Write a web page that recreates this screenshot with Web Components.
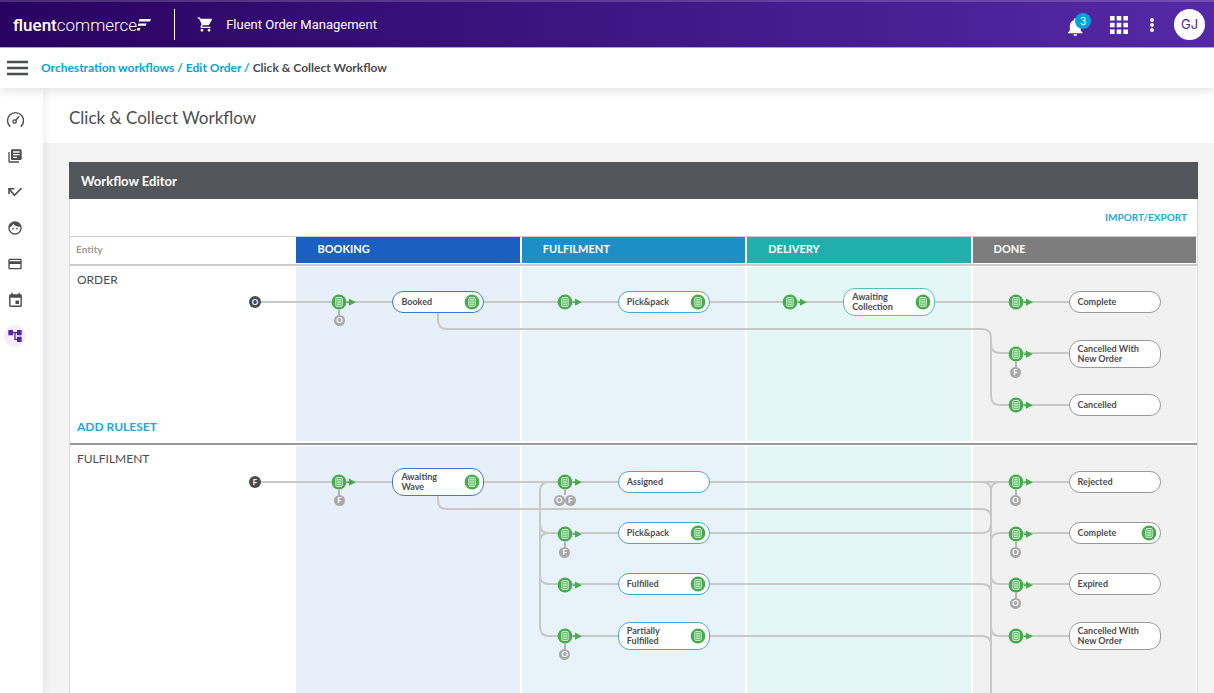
<!DOCTYPE html>
<html lang="en">
  <head>
    <meta charset="utf-8">
    <title>Click &amp; Collect Workflow</title>
    <style>
      body {
        margin: 0;
        background: #f4f4f4;
        color: #4a4c50;
        font-family: Lato, "Liberation Sans", sans-serif;
      }
    </style>
  </head>
  <body>
    <app-shell>
      <app-header slot="header" user="GJ" alerts="3">Fluent Order Management</app-header>
      <app-breadcrumbs slot="breadcrumbs">
        <a href="#workflows">Orchestration workflows</a>
        <a href="#order">Edit Order</a>
        <span>Click &amp; Collect Workflow</span>
      </app-breadcrumbs>
      <app-sidebar slot="sidebar"></app-sidebar>
      <page-title slot="title">Click &amp; Collect Workflow</page-title>

      <workflow-editor>
        <span slot="title">Workflow Editor</span>

        <workflow-lane entity="ORDER" ruleset
          edges="M0:185 36H4:97
                 M1:143 46V54Q1:143 63 1:152 63H4:10Q4:19 63 4:19 72V130Q4:19 139 4:28 139H4:97
                 M4:19 78Q4:19 87 4:28 87H4:97">
          <entity-tag at="0:179" y="36" start>O</entity-tag>
          <flow-ruleset at="1:36" y="36" tags="O"></flow-ruleset>
          <flow-state at="1:97" y="36" color="#3f78cd" rules>Booked</flow-state>
          <flow-ruleset at="2:36" y="36"></flow-ruleset>
          <flow-state at="2:97" y="36" color="#4aa5d6" rules>Pick&amp;pack</flow-state>
          <flow-ruleset at="3:36" y="36"></flow-ruleset>
          <flow-state at="3:97" y="36" color="#4fc0bf" rules>Awaiting Collection</flow-state>
          <flow-ruleset at="4:36" y="36"></flow-ruleset>
          <flow-state at="4:97" y="36">Complete</flow-state>
          <flow-ruleset at="4:36" y="88" tags="F"></flow-ruleset>
          <flow-state at="4:97" y="88">Cancelled With New Order</flow-state>
          <flow-ruleset at="4:36" y="139"></flow-ruleset>
          <flow-state at="4:97" y="139">Cancelled</flow-state>
        </workflow-lane>

        <workflow-lane entity="FULFILMENT"
          edges="M0:185 37H4:97
                 M1:143 50V56Q1:143 64 1:152 64H4:10Q4:19 64 4:19 73
                 M2:28 37Q2:19 37 2:19 46V182Q2:19 191 2:28 191H4:10Q4:19 191 4:19 200
                 M2:19 79Q2:19 88 2:28 88H4:10Q4:19 88 4:19 79
                 M2:19 97Q2:19 88 2:28 88
                 M2:19 130Q2:19 139 2:28 139H4:10Q4:19 139 4:19 148
                 M4:10 37Q4:19 37 4:19 46V2000
                 M4:19 46Q4:19 37 4:28 37
                 M4:19 97Q4:19 88 4:28 88H4:97
                 M4:19 130Q4:19 139 4:28 139H4:97
                 M4:19 182Q4:19 191 4:28 191H4:97">
          <entity-tag at="0:179" y="37" start>F</entity-tag>
          <flow-ruleset at="1:36" y="37" tags="F"></flow-ruleset>
          <flow-state at="1:97" y="37" color="#3f78cd" rules>Awaiting Wave</flow-state>
          <flow-ruleset at="2:36" y="37" tags="OF"></flow-ruleset>
          <flow-state at="2:97" y="37" color="#4aa5d6">Assigned</flow-state>
          <flow-ruleset at="2:36" y="89" tags="F"></flow-ruleset>
          <flow-state at="2:97" y="88" color="#4aa5d6" rules>Pick&amp;pack</flow-state>
          <flow-ruleset at="2:36" y="140"></flow-ruleset>
          <flow-state at="2:97" y="139" color="#4aa5d6" rules>Fulfilled</flow-state>
          <flow-ruleset at="2:36" y="191" tags="O"></flow-ruleset>
          <flow-state at="2:97" y="191" color="#4aa5d6" rules>Partially Fulfilled</flow-state>
          <flow-ruleset at="4:36" y="37" tags="O"></flow-ruleset>
          <flow-state at="4:97" y="37">Rejected</flow-state>
          <flow-ruleset at="4:36" y="89" tags="O"></flow-ruleset>
          <flow-state at="4:97" y="88" rules>Complete</flow-state>
          <flow-ruleset at="4:36" y="140" tags="O"></flow-ruleset>
          <flow-state at="4:97" y="139">Expired</flow-state>
          <flow-ruleset at="4:36" y="191"></flow-ruleset>
          <flow-state at="4:97" y="191">Cancelled With New Order</flow-state>
        </workflow-lane>
      </workflow-editor>
    </app-shell>

    <script>
      // The sheet icon used by rulesets and by states that carry rules
      const rulesIcon = `
        <svg class="rules" width="16" height="16" viewBox="0 0 16 16" aria-hidden="true">
          <circle cx="8" cy="8" r="7.4" fill="#45ab4d"/>
          <rect x="4.8" y="3.6" width="6.4" height="8.8" rx=".8" fill="#5cb863" stroke="#e6f5e7" stroke-width=".9"/>
          <path d="M6 5.6h4M6 7.2h4M6 8.8h4M6 10.4h4" stroke="#e6f5e7" stroke-width=".8"/>
        </svg>`;

      // Places an element on a lane: at="stage:offset" y="middle"
      function place(element) {
        const [stage, offset] = element.getAttribute("at").split(":");
        element.style.left = `calc(${stage * 20}% + ${offset}px)`;
        element.style.top = `${element.getAttribute("y")}px`;
      }

      class AppShell extends HTMLElement {
        constructor() {
          super();
          this.attachShadow({ mode: "open" }).innerHTML = `
            <style>
              :host {
                display: flex;
                flex-direction: column;
                min-height: 100vh;
              }
              .body {
                flex: 1;
                display: grid;
                grid-template-columns: 43px minmax(0, 1fr);
              }
              main {
                display: flex;
                flex-direction: column;
              }
              .content {
                flex: 1;
                display: flex;
                flex-direction: column;
                padding: 19px 16px 0 26px;
              }
            </style>
            <slot name="header"></slot>
            <slot name="breadcrumbs"></slot>
            <div class="body">
              <slot name="sidebar"></slot>
              <main>
                <slot name="title"></slot>
                <div class="content"><slot></slot></div>
              </main>
            </div>`;
        }
      }

      class AppHeader extends HTMLElement {
        constructor() {
          super();
          this.attachShadow({ mode: "open" }).innerHTML = `
            <style>
              :host {
                box-sizing: border-box;
                display: flex;
                align-items: center;
                height: 48px;
                padding: 0 9px 0 13px;
                border-top: 2px solid #ffffff2b;
                border-bottom: 1px solid #b9a6dc;
                background: linear-gradient(90deg, #2a0260, #5529a6) border-box;
                color: #fff;
              }
              .logo {
                display: flex;
                align-items: center;
                color: #fff;
                font: 300 17px/24px Roboto, sans-serif;
                text-decoration: none;
              }
              .logo b { font-weight: 500; }
              .product {
                display: flex;
                align-items: center;
                gap: 12px;
                height: 31px;
                margin-left: 23px;
                padding-left: 22px;
                border-left: 1px solid #fff;
                font: 13px/20px Roboto, sans-serif;
              }
              .tools {
                display: flex;
                align-items: center;
                gap: 14px;
                margin-left: auto;
              }
              button {
                display: grid;
                place-items: center;
                padding: 0;
                border: 0;
                background: none;
                color: inherit;
              }
              svg { fill: currentColor; }
              .alerts {
                position: relative;
                width: 23px;
                height: 24px;
                place-items: end start;
              }
              .badge {
                position: absolute;
                top: 0;
                right: 0;
                width: 16px;
                height: 16px;
                border-radius: 50%;
                background: #00a3e0;
                font: 10px/16px Inter, sans-serif;
                text-align: center;
              }
              .user {
                width: 31px;
                height: 31px;
                margin-left: 3px;
                border-radius: 50%;
                background: #fff;
                color: #4c2a94;
                font: 13px/31px Inter, sans-serif;
              }
            </style>
            <a class="logo" href="#home">
              <span><b>fluent</b>commerce</span>
              <svg width="14" height="14" viewBox="0 0 14 14" aria-hidden="true">
                <path d="M2.5 1H14L13 3.4H1.6zM1.5 5.4H9.6L8.7 7.8H.7zM.5 10H3.4L2.6 12.4H0z"/>
              </svg>
            </a>
            <div class="product">
              <svg width="17" height="17" viewBox="0 0 24 24" aria-hidden="true">
                <path d="M7 18c-1.1 0-1.99.9-1.99 2S5.9 22 7 22s2-.9 2-2-.9-2-2-2zM1 2v2h2l3.6 7.59-1.35 2.45c-.16.28-.25.61-.25.96 0 1.1.9 2 2 2h12v-2H7.42c-.14 0-.25-.11-.25-.25l.03-.12.9-1.63h7.45c.75 0 1.41-.41 1.75-1.03l3.58-6.49A1 1 0 0 0 20 4H5.21l-.94-2H1zm16 16c-1.1 0-1.99.9-1.99 2s.89 2 1.99 2 2-.9 2-2-.9-2-2-2z"/>
              </svg>
              <slot></slot>
            </div>
            <div class="tools">
              <button class="alerts" aria-label="Notifications">
                <svg width="20" height="20" viewBox="4 1 22 22">
                  <path d="M12 22c1.1 0 2-.9 2-2h-4c0 1.1.89 2 2 2zm6-6v-5c0-3.07-1.64-5.64-4.5-6.32V4c0-.83-.67-1.5-1.5-1.5s-1.5.67-1.5 1.5v.68C7.63 5.36 6 7.92 6 11v5l-2 2v1h16v-1l-2-2z"/>
                </svg>
                <span class="badge"></span>
              </button>
              <button aria-label="Apps">
                <svg width="28" height="20" viewBox="-4 0 28 20">
                  <path d="M1 1h4.6v4.6H1zM7.7 1h4.6v4.6H7.7zM14.4 1h4.6v4.6h-4.6zM1 7.7h4.6v4.6H1zM7.7 7.7h4.6v4.6H7.7zM14.4 7.7h4.6v4.6h-4.6zM1 14.4h4.6v4.6H1zM7.7 14.4h4.6v4.6H7.7zM14.4 14.4h4.6v4.6h-4.6z"/>
                </svg>
              </button>
              <button aria-label="More">
                <svg width="10" height="16" viewBox="0 0 10 16">
                  <circle cx="5" cy="3" r="1.9"/><circle cx="5" cy="8" r="1.9"/><circle cx="5" cy="13" r="1.9"/>
                </svg>
              </button>
              <button class="user"></button>
            </div>`;
        }

        connectedCallback() {
          this.shadowRoot.querySelector(".badge").textContent = this.getAttribute("alerts");
          this.shadowRoot.querySelector(".user").textContent = this.getAttribute("user");
        }
      }

      class AppBreadcrumbs extends HTMLElement {
        constructor() {
          super();
          this.attachShadow({ mode: "open" }).innerHTML = `
            <style>
              :host {
                position: relative;
                z-index: 2;
                display: flex;
                align-items: center;
                gap: 13px;
                height: 40px;
                padding: 0 7px;
                background: #fff;
                box-shadow: 0 2px 10px #00000022;
                font: 700 12px/16px Lato, sans-serif;
              }
              button {
                display: flex;
                padding: 0;
                border: 0;
                background: none;
              }
              nav {
                display: flex;
                gap: 3px;
              }
              ::slotted(a) {
                color: #00a3e0;
                text-decoration: none;
              }
              ::slotted(a)::after { content: " /"; }
            </style>
            <button aria-label="Menu">
              <svg width="21" height="16" viewBox="0 0 21 16">
                <path d="M0 2h21M0 8h21M0 14h21" stroke="#4a4c50" stroke-width="2.4"/>
              </svg>
            </button>
            <nav><slot></slot></nav>`;
        }
      }

      class AppSidebar extends HTMLElement {
        constructor() {
          super();
          this.attachShadow({ mode: "open" }).innerHTML = `
            <style>
              :host {
                position: relative;
                z-index: 1;
                display: block;
                background: #fff;
                box-shadow: 1px 0 10px #00000016;
              }
              nav {
                display: flex;
                flex-direction: column;
                padding: 14px 4px;
              }
              a {
                display: grid;
                place-items: center;
                width: 22px;
                height: 22px;
                margin: 7px 0;
                border-radius: 50%;
                color: #4a4c50;
              }
              a[aria-current] {
                background: #f6ecfd;
                color: #5226a8;
              }
              svg { fill: currentColor; }
              .line {
                fill: none;
                stroke: currentColor;
              }
            </style>
            <nav>
              <a href="#dashboard" aria-label="Dashboard">
                <svg class="line" width="18" height="18" viewBox="0 0 18 18" stroke-width="1.4" stroke-linecap="round">
                  <path d="M3.8 15.2A8 8 0 1 1 15.2 15.2M9.8 9.2l3-3.4"/><circle cx="8.6" cy="10.6" r="1.7"/>
                </svg>
              </a>
              <a href="#catalogue" aria-label="Catalogue">
                <svg width="16" height="16" viewBox="0 0 24 24"><path d="M4 6H2v14c0 1.1.9 2 2 2h14v-2H4V6zm16-4H8c-1.1 0-2 .9-2 2v12c0 1.1.9 2 2 2h12c1.1 0 2-.9 2-2V4c0-1.1-.9-2-2-2zm-1 9H9V9h10v2zm-4 4H9v-2h6v2zm4-8H9V5h10v2z"/></svg>
              </a>
              <a href="#orders" aria-label="Orders">
                <svg class="line" width="16" height="16" viewBox="0 0 16 16" stroke-width="1.6"><path d="M2 10V4.8H7.5M2.3 5L7.5 11.2L14.5 4.2"/></svg>
              </a>
              <a href="#customers" aria-label="Customers">
                <svg width="16" height="16" viewBox="0 0 24 24"><path d="M9 11.75a1.25 1.25 0 1 0 0 2.5 1.25 1.25 0 0 0 0-2.5zm6 0a1.25 1.25 0 1 0 0 2.5 1.25 1.25 0 0 0 0-2.5zM12 2C6.48 2 2 6.48 2 12s4.48 10 10 10 10-4.48 10-10S17.52 2 12 2zm0 18c-4.41 0-8-3.59-8-8 0-.29.02-.58.05-.86 2.36-1.05 4.23-2.98 5.21-5.37C11.07 8.33 14.05 10 17.42 10c.78 0 1.53-.09 2.25-.26.21.71.33 1.47.33 2.26 0 4.41-3.59 8-8 8z"/></svg>
              </a>
              <a href="#payments" aria-label="Payments">
                <svg width="16" height="16" viewBox="0 0 24 24"><path d="M20 4H4c-1.11 0-1.99.89-1.99 2L2 18c0 1.11.89 2 2 2h16c1.11 0 2-.89 2-2V6c0-1.11-.89-2-2-2zm0 14H4v-6h16v6zm0-10H4V6h16v2z"/></svg>
              </a>
              <a href="#schedule" aria-label="Schedule">
                <svg width="17" height="17" viewBox="0 0 24 24"><path d="M17 12h-5v5h5v-5zM16 1v2H8V1H6v2H5c-1.11 0-1.99.9-1.99 2L3 19c0 1.1.89 2 2 2h14c1.1 0 2-.9 2-2V5c0-1.1-.9-2-2-2h-1V1h-2zm3 18H5V8h14v11z"/></svg>
              </a>
              <a href="#workflows" aria-label="Workflows" aria-current="page">
                <svg width="16" height="16" viewBox="0 0 24 24"><path d="M22 11V3h-7v3H9V3H2v8h7V8h2v10h4v3h7v-8h-7v3h-2V8h2v3z"/></svg>
              </a>
            </nav>`;
        }
      }

      class PageTitle extends HTMLElement {
        constructor() {
          super();
          this.attachShadow({ mode: "open" }).innerHTML = `
            <style>
              :host {
                display: block;
                padding: 18px 26px 13px;
                background: #fff;
              }
              h1 {
                margin: 0;
                font: 400 17px/24px Lato, sans-serif;
              }
            </style>
            <h1><slot></slot></h1>`;
        }
      }

      class WorkflowEditor extends HTMLElement {
        constructor() {
          super();
          this.attachShadow({ mode: "open" }).innerHTML = `
            <style>
              :host {
                flex: 1;
                display: flex;
                flex-direction: column;
                border: solid #d8d8d8;
                border-width: 0 1px;
                background: #fff;
              }
              h2 {
                margin: 0 -1px;
                padding: 9px 12px 8px;
                background: #53565a;
                color: #fff;
                font: 700 13px/20px Lato, sans-serif;
              }
              .toolbar {
                display: flex;
                justify-content: flex-end;
                padding: 10px 10px;
              }
              button {
                padding: 0;
                border: 0;
                background: none;
                color: #1ba8e0;
                font: 700 10px/17px Lato, sans-serif;
              }
              .stages {
                display: grid;
                grid-template-columns: repeat(5, 1fr);
                padding-bottom: 1px;
                border-top: 1px solid #ccc;
                border-bottom: 2px solid #ccc;
                font: 700 11px/24px Lato, sans-serif;
              }
              .stages div {
                margin: 0 1px;
                padding: 0 21px 2px;
                background: var(--stage);
                color: #fff;
              }
              .stages .entity {
                padding: 0 5px;
                color: #999;
                font-size: 10px;
              }
            </style>
            <h2><slot name="title"></slot></h2>
            <div class="toolbar"><button>IMPORT/EXPORT</button></div>
            <div class="stages">
              <div class="entity">Entity</div>
              <div style="--stage: #1b60c0">BOOKING</div>
              <div style="--stage: #1e8fc6">FULFILMENT</div>
              <div style="--stage: #21afae">DELIVERY</div>
              <div style="--stage: #7d7d7d">DONE</div>
            </div>
            <slot></slot>`;
        }
      }

      class WorkflowLane extends HTMLElement {
        constructor() {
          super();
          this.attachShadow({ mode: "open" }).innerHTML = `
            <style>
              :host {
                position: relative;
                display: grid;
                grid-template-columns: repeat(5, 1fr);
                min-height: 177px;
                overflow: hidden;
              }
              :host(:not(:first-of-type)) {
                flex: 1;
                min-height: 248px;
                border-top: 2px solid #999;
              }
              .stage {
                margin: 1px 1px 2px;
                background: var(--stage);
              }
              :host(:last-of-type) .stage { margin-bottom: 0; }
              .entity {
                display: flex;
                flex-direction: column;
                justify-content: space-between;
                align-items: flex-start;
                padding: 5px 7px 7px;
                font: 12px/18px Lato, sans-serif;
              }
              button {
                padding: 0;
                border: 0;
                background: none;
                color: #1ba8e0;
                font: 700 12px/18px Lato, sans-serif;
              }
              svg {
                position: absolute;
                width: 100%;
                height: 100%;
                fill: none;
                stroke: #c8c8c8;
                stroke-width: 2;
              }
            </style>
            <div class="entity"><span></span></div>
            <div class="stage" style="--stage: #e7eff9"></div>
            <div class="stage" style="--stage: #e7f3f9"></div>
            <div class="stage" style="--stage: #e5f6f6"></div>
            <div class="stage" style="--stage: #f1f1f1"></div>
            <svg aria-hidden="true"><path/></svg>
            <slot></slot>`;
        }

        connectedCallback() {
          const entity = this.shadowRoot.querySelector(".entity");
          entity.firstChild.textContent = this.getAttribute("entity");
          if (this.hasAttribute("ruleset")) {
            const button = document.createElement("button");
            button.textContent = "ADD RULESET";
            entity.append(button);
          }
          this.drawEdges();
          new ResizeObserver(() => this.drawEdges()).observe(this);
        }

        // Edges use the same stage:offset notation as the nodes
        drawEdges() {
          const stageWidth = this.clientWidth / 5;
          const d = this.getAttribute("edges").replace(/(\d):(\d+)/g, (match, stage, offset) =>
            Math.round(stage * stageWidth + Number(offset)));
          this.shadowRoot.querySelector("path").setAttribute("d", d);
        }
      }

      class FlowState extends HTMLElement {
        constructor() {
          super();
          this.attachShadow({ mode: "open" }).innerHTML = `
            <style>
              :host {
                position: absolute;
                transform: translateY(-50%);
                box-sizing: border-box;
                display: flex;
                align-items: center;
                justify-content: space-between;
                gap: 8px;
                width: 92px;
                min-height: 22px;
                padding: 3px 3px 3px 8px;
                border: 1px solid var(--line, #999);
                border-radius: 12px;
                background: #fff;
                font: 700 9px/10px Lato, sans-serif;
              }
              .rules { flex: none; margin: -3px 0; }
            </style>
            <span><slot></slot></span>`;
        }

        connectedCallback() {
          place(this);
          if (this.hasAttribute("color")) {
            this.style.setProperty("--line", this.getAttribute("color"));
          }
          if (this.hasAttribute("rules")) {
            this.shadowRoot.querySelector("span").insertAdjacentHTML("afterend", rulesIcon);
          }
        }
      }

      class EntityTag extends HTMLElement {
        constructor() {
          super();
          this.attachShadow({ mode: "open" }).innerHTML = `
            <style>
              :host {
                display: block;
                width: 11px;
                height: 11px;
                border-radius: 50%;
                background: #a8a8a8;
                color: #fff;
                font: 700 8px/11px Lato, sans-serif;
                text-align: center;
              }
              :host([start]) {
                position: absolute;
                transform: translateY(-50%);
                width: 12px;
                height: 12px;
                background: #484b50;
                line-height: 12px;
              }
            </style>
            <slot></slot>`;
        }

        connectedCallback() {
          if (this.hasAttribute("at")) place(this);
        }
      }

      class FlowRuleset extends HTMLElement {
        constructor() {
          super();
          this.attachShadow({ mode: "open" }).innerHTML = `
            <style>
              :host {
                position: absolute;
                display: grid;
                grid-template-columns: 16px;
                justify-items: center;
                width: 16px;
                margin-top: -8px;
              }
              .icon {
                display: flex;
                width: 16px;
              }
              .icon svg { flex: none; }
              .stem {
                width: 2px;
                height: 5px;
                background: #b4b4b4;
              }
              .tags { display: flex; }
            </style>
            <div class="icon">
              ${rulesIcon}
              <svg width="9" height="16" viewBox="0 0 9 16" fill="#45ab4d" aria-hidden="true">
                <path d="M0 7.4H2V4.6L8.8 8.2L2 11.8V9H0z"/>
              </svg>
            </div>`;
        }

        connectedCallback() {
          place(this);
          const tags = this.getAttribute("tags");
          if (!tags) return;
          const items = [...tags].map((tag) => `<entity-tag>${tag}</entity-tag>`).join("");
          this.shadowRoot.querySelector(".icon").insertAdjacentHTML("afterend",
            `<div class="stem"></div><div class="tags">${items}</div>`);
        }
      }

      customElements.define("app-shell", AppShell);
      customElements.define("app-header", AppHeader);
      customElements.define("app-breadcrumbs", AppBreadcrumbs);
      customElements.define("app-sidebar", AppSidebar);
      customElements.define("page-title", PageTitle);
      customElements.define("workflow-editor", WorkflowEditor);
      customElements.define("workflow-lane", WorkflowLane);
      customElements.define("flow-state", FlowState);
      customElements.define("entity-tag", EntityTag);
      customElements.define("flow-ruleset", FlowRuleset);
    </script>
  </body>
</html>
